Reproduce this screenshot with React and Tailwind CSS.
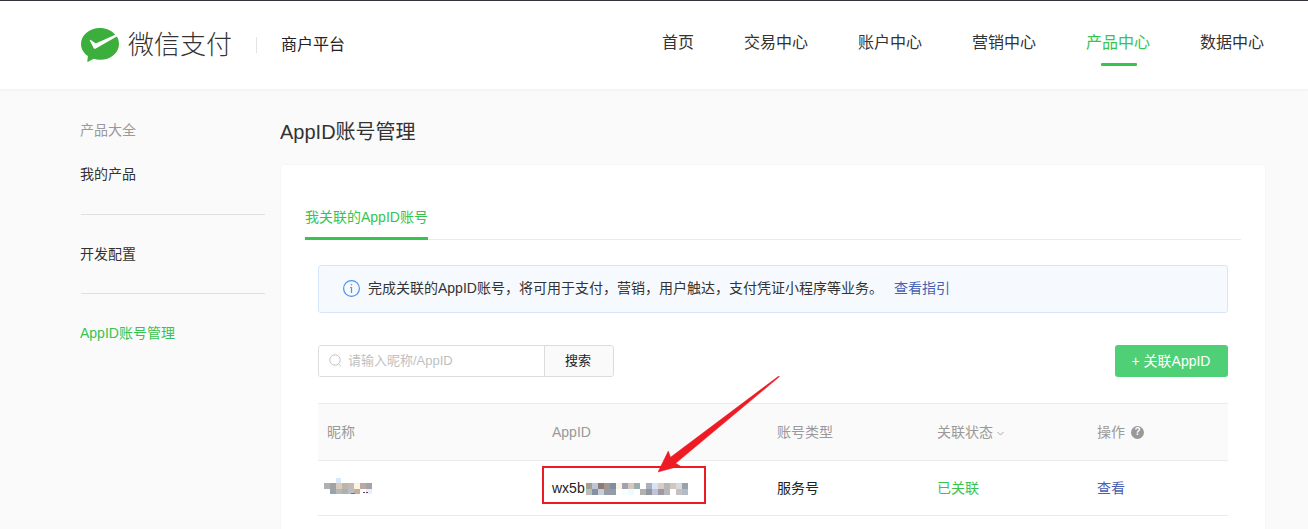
import React from "react";

const NAV = ["首页", "交易中心", "账户中心", "营销中心", "产品中心", "数据中心"];

const NICK_TOP = ["#b0b0b0", "#a3a1a1", "#dccabb", "#bab6ae", "#c3bbb3", "#fdf3e0", "#b9a9a0", "#a5a3a5"];
const NICK_BOTTOM = [null, "#96a5b5", "#b5b7ba", "#b0b0aa", "#b6bfca", "#c0b09c", null, "#e6efff"];

const ID_TOP = ["#a39f93", "#bcc6d8", "#8c7b72", "#a2968e", "#7c8fa0", "#faf2e6", "#a4a1ab", "#d3c9c0", "#9dacae", null, "#a9b0b9", "#cfe4ff", "#dccbc3", "#b7b7b8", "#d0c8bf", "#d9d9e2", "#9aa2a9"];
const ID_BOTTOM = ["#bdbdb8", "#8590a3", "#c9cdd8", "#949ca6", "#939da8", null, "#f6fffd", "#effaff", null, "#b1b0af", "#8f979f", "#c4c1d2", "#9b9ba8", "#b7b7bc", null, "#c6c1bf", "#b3bbc4"];

function Blocks({ colors, y, h }) {
  return colors.map((c, i) => c && <rect key={i} x={i * 6} y={y} width="6" height={h} fill={c} />);
}

function Logo() {
  return (
    <svg className="h-[34px] w-[38px] shrink-0" viewBox="0 0 38 34">
      <path fill="#3cae3c" d="M19 0C8.500 0 0 7.100 0 16c0 4.900 2.700 9.200 6.900 12.100L6.300 33.200c-.1.600.4.900.9.600l5.400-3c2 .700 4.200 1 6.400 1 10.500 0 19-7.100 19-15.900 0-2.700-.8-5.200-2.200-7.400L14.800 20.600c-.9.500-1.700.3-2.200-.7L8.900 12.800c-.3-.8.2-1.300.9-.9l4.300 3c.5.300 1 .4 1.700.1L34.200 6.700C30.700 2.400 25 0 19 0z" />
    </svg>
  );
}

function Header() {
  return (
    <header className="flex h-[89px] items-start border-t border-[#35323b] bg-white pl-[81px] pr-[44px] shadow-[0_1px_3px_rgba(0,0,0,0.05)]">
      <div className="flex h-[88px] items-center">
        <Logo />
        <div className="ml-[9px] text-[26px] font-light leading-none text-[#333]">微信支付</div>
        <div className="ml-6 h-4 w-px bg-[#e3e3e3]" />
        <div className="ml-6 text-base leading-none text-[#222]">商户平台</div>
      </div>
      <nav className="ml-auto flex h-[65px] items-end gap-[50px] text-base leading-6 text-[#333]">
        {NAV.map((item) => (
          <div key={item} className={item === "首页" ? "-mr-[2px] flex flex-col items-center" : item === "产品中心" ? "flex flex-col items-center text-[#38c351]" : "flex flex-col items-center"}>
            <span>{item}</span>
            <span className={item === "产品中心" ? "ml-[2px] mt-2 h-[3px] w-9 rounded-[1px] bg-[#38c351]" : "mt-2 h-[3px] w-9"} />
          </div>
        ))}
      </nav>
    </header>
  );
}

function Sidebar() {
  return (
    <aside className="mr-4 w-[185px] shrink-0 pt-[31px] text-sm leading-5 text-[#333]">
      <div className="text-[#999]">产品大全</div>
      <div className="mt-6">我的产品</div>
      <div className="ml-px mt-[30px] h-px bg-[#e0e0e0]" />
      <div className="mt-[29px]">开发配置</div>
      <div className="ml-px mt-[29px] h-px bg-[#e0e0e0]" />
      <div className="mt-[29px] text-[#38c351]">AppID账号管理</div>
    </aside>
  );
}

function Notice() {
  return (
    <div className="mx-[13px] mt-[25px] flex h-12 items-center rounded-[3px] border border-[#d5e6fb] bg-[#f6faff] pb-[2px] pl-6 text-sm text-[#333]">
      <svg className="h-[17px] w-[17px]" viewBox="0 0 17 17" fill="none" stroke="#4b93f1">
        <circle cx="8.500" cy="8.500" r="7.900" strokeWidth="1.200" />
        <path d="M8.500 7v6M7.200 7.500h1.500" strokeWidth="1.200" />
        <circle cx="8.400" cy="4.700" r=".5" fill="#4b93f1" strokeWidth=".5" />
      </svg>
      <span className="ml-2">完成关联的AppID账号，将可用于支付，营销，用户触达，支付凭证小程序等业务。</span>
      <span className="ml-[11px] text-[#4760b3]">查看指引</span>
    </div>
  );
}

function Toolbar() {
  return (
    <div className="mx-[13px] mt-8 flex h-8 items-stretch justify-between">
      <div className="flex w-[296px] overflow-hidden rounded-[3px] border border-[#dcdcdc]">
        <div className="flex w-[226px] items-center border-r border-[#dcdcdc] bg-white pl-[10px] text-[13px] text-[#bfbfbf]">
          <svg className="mb-[2px] h-[13px] w-[13px]" viewBox="0 0 13 13" fill="none" stroke="#c4c4c4">
            <circle cx="6" cy="6" r="5.200" />
            <path d="M9.500 9.800l2.300 2.200" />
          </svg>
          <span className="ml-[6px]">请输入昵称/AppID</span>
        </div>
        <div className="flex flex-1 items-center justify-center bg-[#fafafa] pr-[2px] text-[13px] text-[#222]">搜索</div>
      </div>
      <div className="flex w-[113px] items-center justify-center rounded-[3px] bg-[#4fd077] pr-px text-sm text-white">+ 关联AppID</div>
    </div>
  );
}

const COLS = "grid grid-cols-[225px_225px_160px_160px_140px] items-center border-b border-[#ebebeb] text-sm";

function Table() {
  return (
    <div className="mx-[13px] mt-[26px] border-t border-[#ebebeb]">
      <div className={COLS + " h-[57px] bg-[#fafafa] text-[#999]"}>
        <div className="pl-[9px]">昵称</div>
        <div className="pl-[9px]">AppID</div>
        <div className="pl-[9px]">账号类型</div>
        <div className="flex items-center pl-[9px]">
          关联状态
          <svg className="ml-1 mt-[2px] h-[5px] w-[7px]" viewBox="0 0 7 5" fill="none" stroke="#aaa">
            <path d="M.5 1l3 3 3-3" />
          </svg>
        </div>
        <div className="flex items-center pl-[9px]">
          操作
          <span className="ml-[6px] flex h-[13px] w-[13px] items-center justify-center rounded-full bg-[#999] text-[10px] font-bold leading-none text-white">?</span>
        </div>
      </div>
      <div className={COLS + " h-[55px] text-[#222]"}>
        <div className="pl-[6px]">
          <svg className="h-[22px] w-[48px]" viewBox="0 0 48 22">
            <rect x="12" y="1" width="5" height="5" fill="#d8e8f8" />
            <Blocks colors={NICK_TOP} y={6} h={6} />
            <Blocks colors={NICK_BOTTOM} y={12} h={5} />
            <path d="M27 16.500h4" stroke="#6d7178" />
            <path d="M39 15.500h2" stroke="#47505f" />
            <path d="M42 15.500h2" stroke="#7b3455" />
          </svg>
        </div>
        <div className="relative flex items-center pl-[9px]">
          <span>wx5b</span>
          <svg className="ml-px h-[14px] w-[102px]" viewBox="0 0 102 14">
            <Blocks colors={ID_TOP} y={2} h={6} />
            <Blocks colors={ID_BOTTOM} y={8} h={6} />
          </svg>
          <div className="absolute -top-[12px] left-[-1px] h-[38px] w-[164px] border-2 border-[#ed1c24]" />
          <svg className="absolute -top-[102px] left-[115px] h-[97px] w-[123px]" viewBox="0 0 123 97">
            <path d="M0 96L10.300 75l2.200 6.300L120.800 0l.5.800L17.700 87.300l4.500 2.700z" fill="#ed1c24" stroke="#ed1c24" strokeWidth=".5" />
          </svg>
        </div>
        <div className="pl-[9px]">服务号</div>
        <div className="pl-[9px] text-[#38c351]">已关联</div>
        <div className="pl-[9px] text-[#4760b3]">查看</div>
      </div>
    </div>
  );
}

export default function App() {
  return (
    <div className="h-[529px] w-[1308px] overflow-hidden bg-[#fafafa] font-['Liberation_Sans','Noto_Sans_CJK_SC',sans-serif]">
      <Header />
      <div className="flex pl-20 pr-[43px]">
        <Sidebar />
        <main className="flex-1">
          <h1 className="-ml-px pt-[29px] text-xl leading-7 text-[#333]">AppID账号管理</h1>
          <section className="mt-[19px] h-[380px] rounded-[3px] bg-white px-6 pt-[38px] shadow-[0_0_2px_rgba(0,0,0,0.05)]">
            <div className="flex h-[37px] border-b border-[#ebebeb]">
              <div className="h-[37px] border-b-3 border-[#38c351] pt-1 text-sm leading-5 text-[#38c351]">我关联的AppID账号</div>
            </div>
            <Notice />
            <Toolbar />
            <Table />
          </section>
        </main>
      </div>
    </div>
  );
}
